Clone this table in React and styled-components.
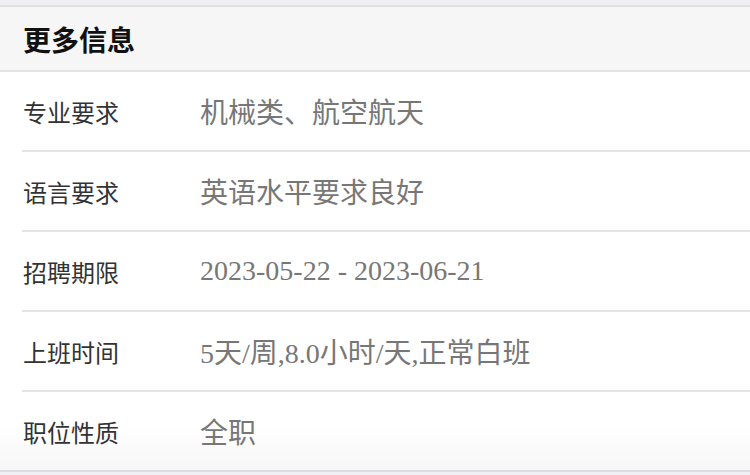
import React from 'react'
import styled, { createGlobalStyle } from 'styled-components'

const GlobalStyle = createGlobalStyle`
  body {
    margin: 0;
    background: #efeff4;
    font-family: "Noto Sans CJK SC", "Noto Sans", sans-serif;
  }
`

const Page = styled.div`
  padding-top: 5px;
  padding-bottom: 20px;
`

const Section = styled.section`
  border-top: 2px solid #e1e1e4;
  border-bottom: 2px solid #dcdcdc;
  background: #fff;
`

const Header = styled.div`
  height: 63px;
  display: flex;
  align-items: center;
  padding-left: 23px;
  background: #f6f6f6;
  border-bottom: 2px solid #e4e4e4;
  font-size: 28px;
  font-weight: 700;
  color: #111;
`

const List = styled.div`
  padding-left: 22px;
  background: linear-gradient(to bottom, #fff 0, #fff 88%, #f7f7f7 100%);
`

const Row = styled.div`
  height: 78px;
  display: flex;
  align-items: center;
  border-bottom: ${p => (p.last ? 'none' : '2px solid #e4e4e4')};
`

const Label = styled.div`
  width: 177px;
  flex-shrink: 0;
  padding-left: 1px;
  font-size: 24px;
  color: #333;
`

const Value = styled.div`
  font-family: "Liberation Serif", "Noto Sans CJK SC", serif;
  font-size: 28px;
  color: #777;
  white-space: nowrap;
`

const items = [
  ['专业要求', '机械类、航空航天'],
  ['语言要求', '英语水平要求良好'],
  ['招聘期限', '2023-05-22 - 2023-06-21'],
  ['上班时间', '5天/周,8.0小时/天,正常白班'],
  ['职位性质', '全职'],
]

export default function App() {
  return (
    <Page>
      <GlobalStyle />
      <Section>
        <Header>更多信息</Header>
        <List>
          {items.map(([k, v], i) => (
            <Row key={k} last={i === items.length - 1}>
              <Label>{k}</Label>
              <Value>{v}</Value>
            </Row>
          ))}
        </List>
      </Section>
    </Page>
  )
}
